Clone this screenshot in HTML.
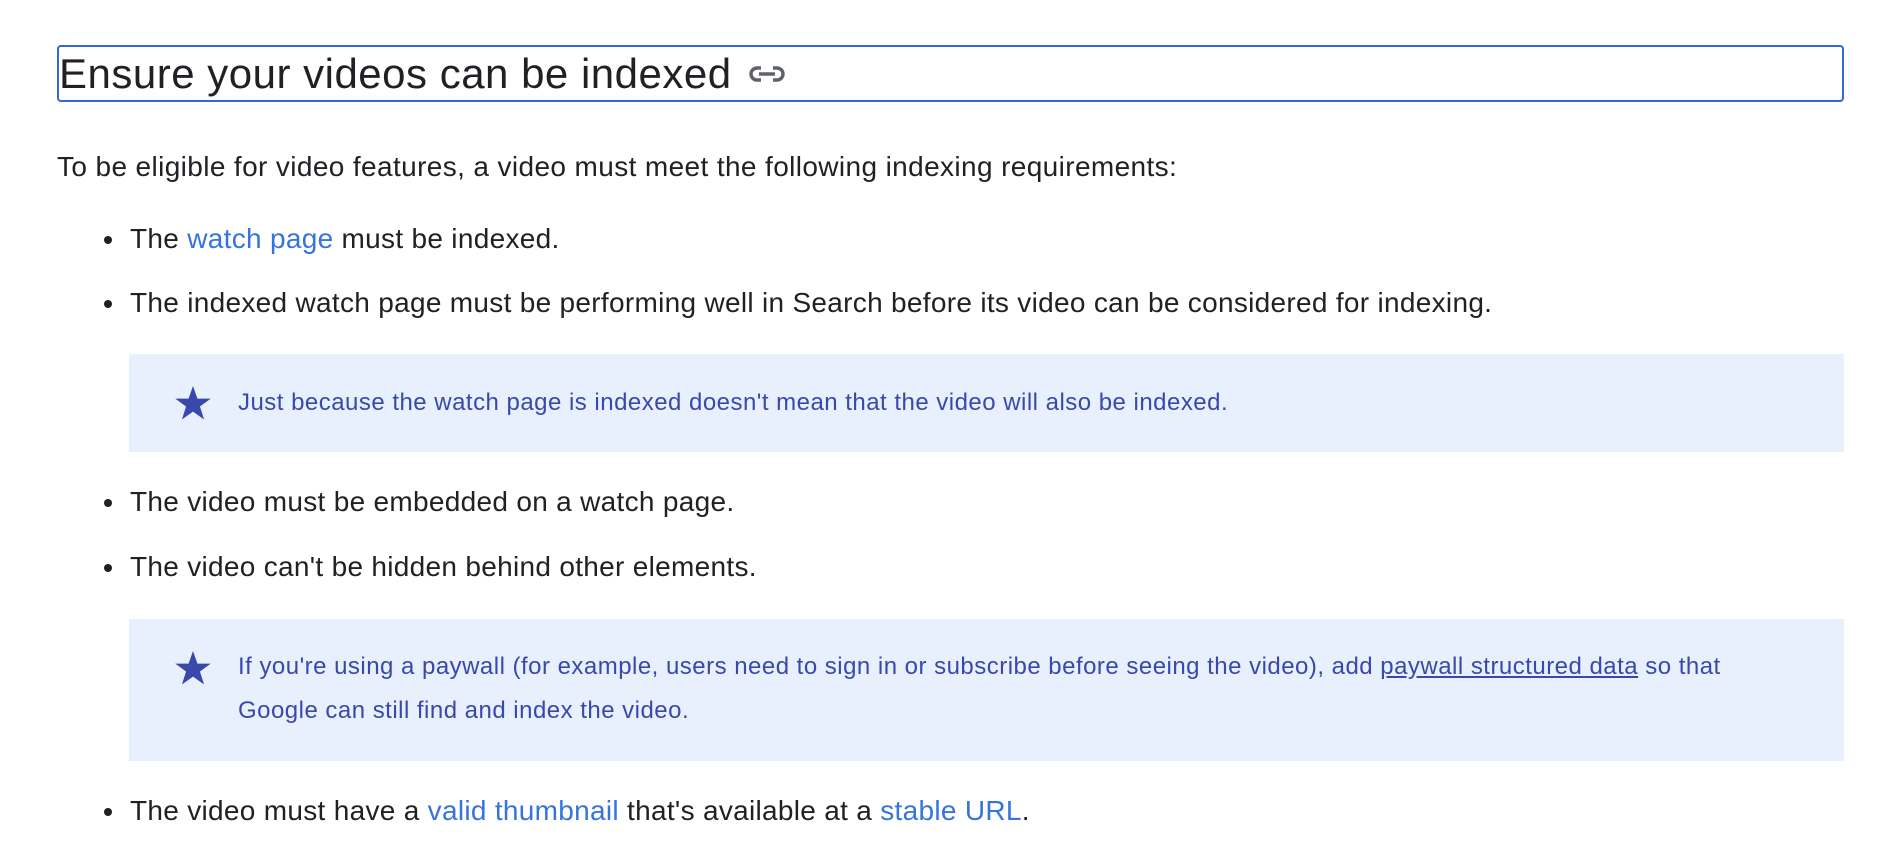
<!DOCTYPE html>
<html><head><style>
body{margin:0;width:1892px;height:866px;background:#fff;font-family:"Liberation Sans",Arial,sans-serif;color:#202124;position:relative;overflow:hidden}
.h{position:absolute;left:57px;top:45px;width:1783px;height:53px;border:2px solid #3367d6;border-radius:4px}
.h span{position:absolute;left:0;top:4px;font-size:42px;line-height:46px;color:#202124;letter-spacing:0.5px}
.h svg{position:absolute;left:689px;top:18px}
.t{position:absolute;left:57px;font-size:28px;line-height:30px;white-space:nowrap;letter-spacing:0.38px}
.li{position:absolute;left:130px;font-size:28px;line-height:30px;white-space:nowrap;letter-spacing:0.3px}
.li:before{content:"";position:absolute;left:-26px;top:12px;width:8px;height:8px;border-radius:50%;background:#202124}
a{color:#3574e0;text-decoration:none}
.note{position:absolute;left:129px;width:1715px;background:#e8f0fe;color:#3949ab;font-size:24px;line-height:44px;letter-spacing:0.48px}
.note .tx{position:absolute;left:109px;width:1510px}
.note svg{position:absolute;left:46px}
.note a{color:#3949ab;text-decoration:underline}
</style></head><body>
<div class="h"><span>Ensure your videos can be indexed</span>
<svg width="38" height="18" viewBox="0 0 38 18"><path d="M13 3H9a6 6 0 0 0 0 12h4M25 3h4a6 6 0 0 1 0 12h-4M11 9h16" fill="none" stroke="#5f6368" stroke-width="3.4"/></svg></div>
<div class="t" style="top:152px">To be eligible for video features, a video must meet the following indexing requirements:</div>
<div class="li" style="top:224px">The <a>watch page</a> must be indexed.</div>
<div class="li" style="top:288px">The indexed watch page must be performing well in Search before its video can be considered for indexing.</div>
<div class="note" style="top:354px;height:98px">
<svg style="top:32px" width="36" height="34" viewBox="0 0 24 23"><path d="M12 0l3 8.5h9l-7.3 5.4 2.8 8.8L12 17.3l-7.5 5.4 2.8-8.8L0 8.5h9z" fill="#3949ab"/></svg>
<div class="tx" style="top:27px">Just because the watch page is indexed doesn't mean that the video will also be indexed.</div></div>
<div class="li" style="top:487px">The video must be embedded on a watch page.</div>
<div class="li" style="top:552px">The video can't be hidden behind other elements.</div>
<div class="note" style="top:619px;height:142px">
<svg style="top:32px" width="36" height="34" viewBox="0 0 24 23"><path d="M12 0l3 8.5h9l-7.3 5.4 2.8 8.8L12 17.3l-7.5 5.4 2.8-8.8L0 8.5h9z" fill="#3949ab"/></svg>
<div class="tx" style="top:26px">If you're using a paywall (for example, users need to sign in or subscribe before seeing the video), add <a>paywall structured data</a> so that<br>Google can still find and index the video.</div></div>
<div class="li" style="top:796px">The video must have a <a>valid thumbnail</a> that's available at a <a>stable URL</a>.</div>
</body></html>
